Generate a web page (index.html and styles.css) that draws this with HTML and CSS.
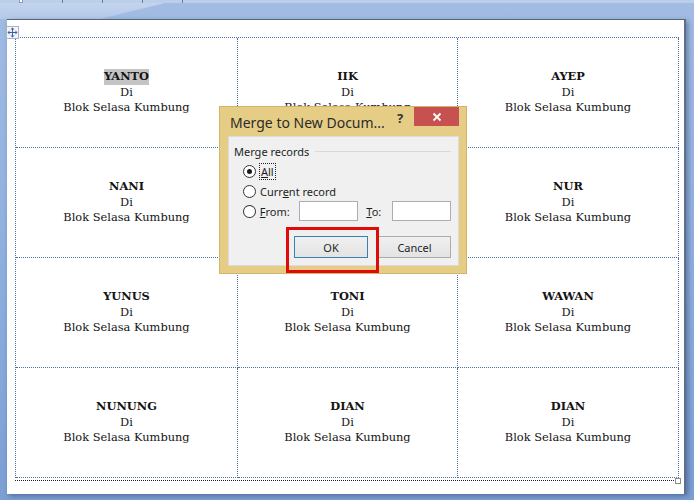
FILE: index.html
```html
<!DOCTYPE html>
<html lang="id">
<head>
    <meta charset="UTF-8">
    <title>Label Undangan - Merge</title>
    <link rel="stylesheet" href="styles.css">
</head>
<body>
<div class="ruler">
    <span class="ruler-marker"></span>
    <span class="tick"></span><span class="tick"></span><span class="tick"></span><span class="tick"></span>
</div>
<div class="sheen"></div>

<div class="page">
    <div class="move-handle">
        <svg width="11" height="11" viewBox="0 0 11 11">
            <path d="M5.5 1 V10 M1 5.5 H10" stroke="#3a5fa8" stroke-width="1"/>
            <path d="M5.5 0.5 L3.5 2.5 H7.5 Z M5.5 10.5 L3.5 8.5 H7.5 Z M0.5 5.5 L2.5 3.5 V7.5 Z M10.5 5.5 L8.5 3.5 V7.5 Z" fill="#3a5fa8"/>
        </svg>
    </div>

    <div class="labels">
        <div class="cell"><b class="name selected">YANTO</b><span>Di</span><span>Blok Selasa Kumbung</span></div>
        <div class="cell"><b class="name">IIK</b><span>Di</span><span>Blok Selasa Kumbung</span></div>
        <div class="cell"><b class="name">AYEP</b><span>Di</span><span>Blok Selasa Kumbung</span></div>

        <div class="cell"><b class="name">NANI</b><span>Di</span><span>Blok Selasa Kumbung</span></div>
        <div class="cell"><b class="name">ASEP</b><span>Di</span><span>Blok Selasa Kumbung</span></div>
        <div class="cell"><b class="name">NUR</b><span>Di</span><span>Blok Selasa Kumbung</span></div>

        <div class="cell"><b class="name">YUNUS</b><span>Di</span><span>Blok Selasa Kumbung</span></div>
        <div class="cell"><b class="name">TONI</b><span>Di</span><span>Blok Selasa Kumbung</span></div>
        <div class="cell"><b class="name">WAWAN</b><span>Di</span><span>Blok Selasa Kumbung</span></div>

        <div class="cell"><b class="name">NUNUNG</b><span>Di</span><span>Blok Selasa Kumbung</span></div>
        <div class="cell"><b class="name">DIAN</b><span>Di</span><span>Blok Selasa Kumbung</span></div>
        <div class="cell"><b class="name">DIAN</b><span>Di</span><span>Blok Selasa Kumbung</span></div>
    </div>

    <div class="doc-end"><span class="end-box"></span></div>
</div>

<div class="dialog">
    <div class="title-bar">
        <span class="title">Merge to New Docum...</span>
        <span class="help">?</span>
        <span class="close">
            <svg width="10" height="10" viewBox="0 0 10 10">
                <path d="M1.5 1.5 L8.5 8.5 M8.5 1.5 L1.5 8.5" stroke="#fff" stroke-width="1.8"/>
            </svg>
        </span>
    </div>
    <div class="panel">
        <div class="group-title"><span>Merge records</span><span class="group-line"></span></div>
        <div class="options">
            <div class="option">
                <span class="radio checked"></span>
                <span class="focus"><u>A</u>ll</span>
            </div>
            <div class="option">
                <span class="radio"></span>
                <span>Curr<u>e</u>nt record</span>
            </div>
            <div class="option">
                <span class="radio"></span>
                <span class="from-label"><u>F</u>rom:</span>
                <span class="field"></span>
                <span class="to-label"><u>T</u>o:</span>
                <span class="field"></span>
            </div>
        </div>
        <div class="buttons">
            <button class="btn btn-default">OK</button>
            <button class="btn">Cancel</button>
        </div>
    </div>
    <div class="highlight-box"></div>
</div>
</body>
</html>
```

FILE: styles.css
```css
body {
    margin: 0;
    width: 694px;
    height: 500px;
    overflow: hidden;
    position: relative;
    background: linear-gradient(to bottom, #a2bce3 0%, #8fb0de 50%, #7c9fd4 100%);
    font-family: "Noto Sans", sans-serif;
}

.ruler {
    height: 3px;
    background: #bccfea;
    display: flex;
    padding-left: 19px;
    gap: 39px;
    position: relative;
    z-index: 2;
}

.ruler-marker {
    width: 4px;
    height: 3px;
    background: #fff;
    border: 1px solid #8a9cb8;
    border-top: none;
    box-sizing: border-box;
}

.tick {
    width: 1px;
    height: 3px;
    background: #6f7f99;
}

/* light diagonal band under the ruler */
.sheen {
    position: absolute;
    left: 0;
    top: 3px;
    width: 180px;
    height: 16px;
    background: linear-gradient(to bottom, #c3d4ee, #b4c9e9);
    clip-path: polygon(0 0, 165px 0, 100px 16px, 0 16px);
}

.page {
    position: relative;
    box-sizing: border-box;
    width: 679px;
    height: 475px;
    margin: 16px 0 0 7px;
    padding: 17px 0 0 8px;
    background: #fff;
    border-top: 1px solid #56667c;
    border-right: 2px solid #5e6f88;
    box-shadow: 2px 2px 5px rgba(30, 50, 90, 0.45);
}

.move-handle {
    position: absolute;
    left: -1px;
    top: 6px;
    width: 11px;
    height: 11px;
    background: #f2f4f8;
    border: 1px solid #a9b3c2;
    display: flex;
}

.labels {
    display: grid;
    grid-template-columns: 222px 220px 221px;
    grid-template-rows: repeat(4, 110px);
    width: max-content;
    border-top: 1px dotted #4a70a4;
    border-left: 1px dotted #4a70a4;
}

.cell {
    box-sizing: border-box;
    border-right: 1px dotted #4a70a4;
    border-bottom: 1px dotted #4a70a4;
    display: flex;
    flex-direction: column;
    align-items: center;
    justify-content: center;
    font-family: "DejaVu Serif", serif;
    font-size: 11.4px;
    line-height: 15.5px;
    color: #141414;
}

.name {
    font-weight: bold;
}

.name.selected {
    background: #c4c4c4;
}

.doc-end {
    width: 663px;
    margin-top: 2px;
    border-top: 1px dotted #222;
    position: relative;
}

.end-box {
    position: absolute;
    right: -3px;
    top: -3px;
    width: 4px;
    height: 4px;
    border: 1px solid #8c8c8c;
    background: #fff;
}

/* dialog */
.dialog {
    position: absolute;
    left: 219px;
    top: 106px;
    width: 248px;
    box-sizing: border-box;
    padding: 0 7px 7px 8px;
    background: #e6cd86;
    border: 1px solid #d2b46a;
    font-size: 11px;
    color: #1e1e1e;
}

.title-bar {
    height: 29px;
    display: flex;
    align-items: flex-start;
}

.title {
    font-size: 14px;
    line-height: 16px;
    margin: 8px 0 0 2px;
    color: #2b2b2b;
    white-space: nowrap;
}

.help {
    margin: 3px 0 0 auto;
    width: 7px;
    font-weight: bold;
    font-size: 13px;
    line-height: 16px;
    color: #333;
}

.close {
    margin-left: 10px;
    width: 45px;
    height: 19px;
    background: #c75050;
    display: flex;
    align-items: center;
    justify-content: center;
}

.panel {
    background: #f0f0f0;
    border: 1px solid #dcdcdc;
    padding: 6px 7px 7px 5px;
}

.group-title {
    display: flex;
    align-items: center;
    height: 16px;
    gap: 6px;
}

.group-line {
    flex: 1;
    height: 1px;
    background: #d8d8d8;
}

.options {
    margin: 2px 0 0 9px;
}

.option {
    height: 20px;
    display: flex;
    align-items: center;
}

.radio {
    width: 13px;
    height: 13px;
    box-sizing: border-box;
    border: 1px solid #333;
    border-radius: 50%;
    background: #fff;
    margin-right: 4px;
    display: flex;
    align-items: center;
    justify-content: center;
}

.radio.checked::after {
    content: "";
    width: 5px;
    height: 5px;
    border-radius: 50%;
    background: #1a1a1a;
}

.focus {
    outline: 1px dotted #222;
    outline-offset: 0;
    padding: 0 1px;
}

.from-label {
    width: 40px;
}

.to-label {
    width: 26px;
    margin-left: 8px;
}

.field {
    width: 60px;
    height: 20px;
    box-sizing: border-box;
    border: 1px solid #abadb3;
    background: #fff;
}

.buttons {
    display: flex;
    justify-content: flex-end;
    gap: 10px;
    margin-top: 15px;
}

.btn {
    width: 73px;
    height: 22px;
    font-family: "Noto Sans", sans-serif;
    font-size: 11px;
    color: #1e1e1e;
    background: linear-gradient(to bottom, #f0f0f0, #e3e3e3);
    border: 1px solid #acacac;
    padding: 0;
}

.btn-default {
    width: 74px;
    border-color: #3c7fb1;
}

.highlight-box {
    position: absolute;
    left: 66px;
    top: 120px;
    width: 93px;
    height: 46px;
    box-sizing: border-box;
    border: 3px solid #e00a0a;
}
```
